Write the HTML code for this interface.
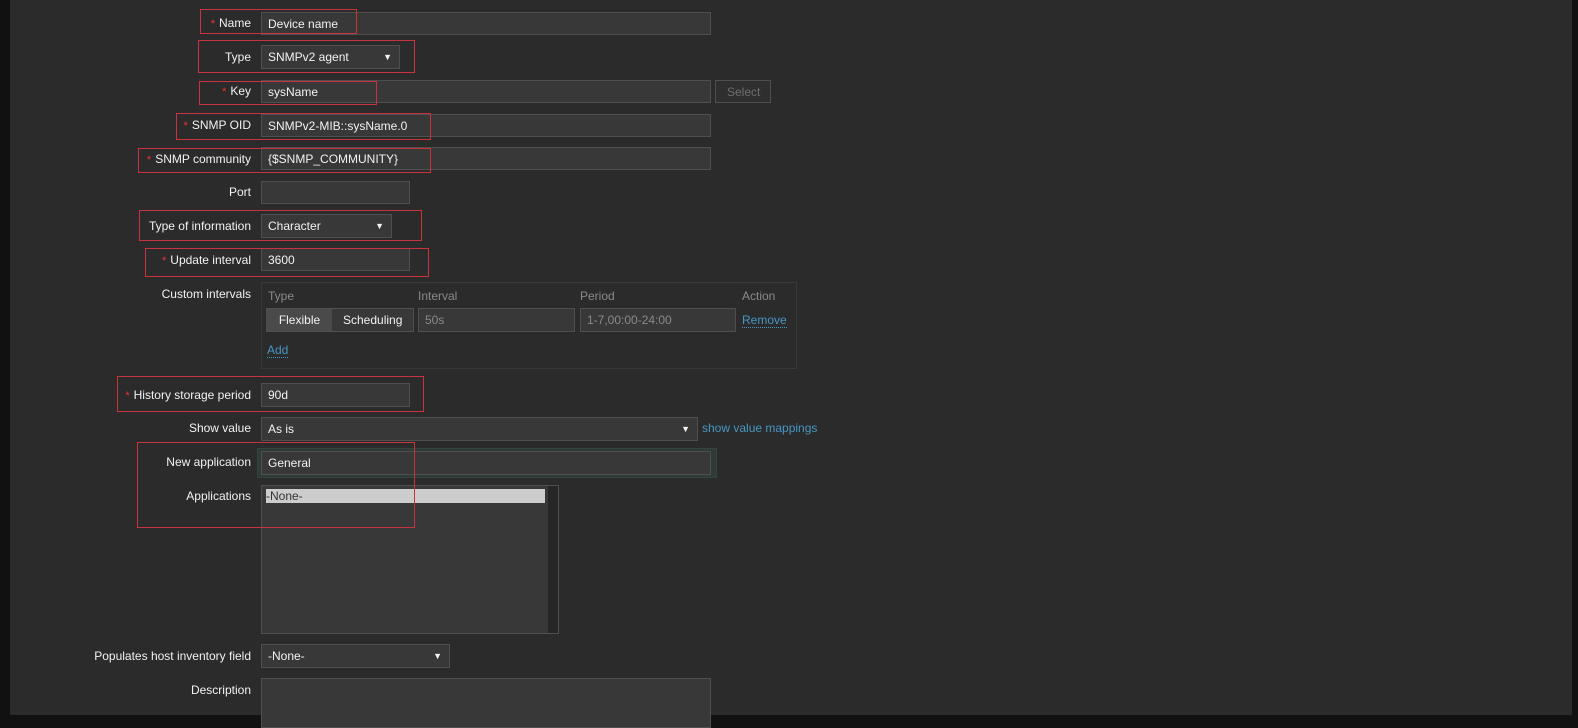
<!DOCTYPE html>
<html><head><style>
*{box-sizing:border-box;margin:0;padding:0}
body{width:1578px;height:715px;background:#111;position:relative;overflow:hidden;font:12px "Liberation Sans",Arial,sans-serif;color:#f2f2f2}
.pg{position:absolute;left:10px;top:0;width:1562px;height:715px;background:#2b2b2b}
.a{position:absolute}
.l{position:absolute;right:1327px;text-align:right;white-space:nowrap;line-height:14px}
.s{color:#e33;font-size:11px;margin-right:4px}
.i{position:absolute;background:#383838;border:1px solid #4f4f4f;padding-left:6px;line-height:22px;white-space:nowrap}
.r{position:absolute;border:1px solid #c9343c}
.ar{position:absolute;right:7px;top:0;font-size:9px}
.lk{color:#4796c4;border-bottom:1px dotted #4796c4}
.g{color:#8a8a8a}
</style></head><body>
<div class="pg"></div>

<div class="l" style="top:16px"><span class="s">*</span>Name</div>
<div class="i" style="left:261px;top:12px;width:450px;height:23px">Device name</div>
<div class="r" style="left:200px;top:9px;width:157px;height:25px"></div>

<div class="l" style="top:50px">Type</div>
<div class="i" style="left:261px;top:45px;width:139px;height:24px">SNMPv2 agent<span class="ar">▼</span></div>
<div class="r" style="left:198px;top:40px;width:217px;height:33px"></div>

<div class="l" style="top:84px"><span class="s">*</span>Key</div>
<div class="i" style="left:261px;top:80px;width:450px;height:23px">sysName</div>
<div class="i" style="left:715px;top:80px;width:56px;height:23px;color:#6f6f6f;background:#2f2f2f;padding-left:11px">Select</div>
<div class="r" style="left:199px;top:81px;width:178px;height:24px"></div>

<div class="l" style="top:118px"><span class="s">*</span>SNMP OID</div>
<div class="i" style="left:261px;top:114px;width:450px;height:23px">SNMPv2-MIB::sysName.0</div>
<div class="r" style="left:176px;top:113px;width:255px;height:27px"></div>

<div class="l" style="top:152px"><span class="s">*</span>SNMP community</div>
<div class="i" style="left:261px;top:147px;width:450px;height:23px">{$SNMP_COMMUNITY}</div>
<div class="r" style="left:138px;top:148px;width:293px;height:25px"></div>

<div class="l" style="top:185px">Port</div>
<div class="i" style="left:261px;top:181px;width:149px;height:23px"></div>

<div class="l" style="top:219px">Type of information</div>
<div class="i" style="left:261px;top:214px;width:131px;height:24px">Character<span class="ar">▼</span></div>
<div class="r" style="left:139px;top:210px;width:283px;height:31px"></div>

<div class="l" style="top:253px"><span class="s">*</span>Update interval</div>
<div class="i" style="left:261px;top:248px;width:149px;height:23px">3600</div>
<div class="r" style="left:145px;top:248px;width:284px;height:29px"></div>

<div class="l" style="top:287px">Custom intervals</div>
<div class="a" style="left:261px;top:282px;width:536px;height:87px;border:1px solid #383838"></div>
<div class="a g" style="left:268px;top:289px">Type</div>
<div class="a g" style="left:418px;top:289px">Interval</div>
<div class="a g" style="left:580px;top:289px">Period</div>
<div class="a g" style="left:742px;top:289px">Action</div>
<div class="a" style="left:266px;top:308px;width:148px;height:24px;border:1px solid #4f4f4f;background:#383838"></div>
<div class="a" style="left:267px;top:309px;width:65px;height:22px;background:#4a4a4a;text-align:center;line-height:22px">Flexible</div>
<div class="a" style="left:343px;top:313px">Scheduling</div>
<div class="i g" style="left:418px;top:308px;width:157px;height:24px">50s</div>
<div class="i g" style="left:580px;top:308px;width:156px;height:24px">1-7,00:00-24:00</div>
<div class="a lk" style="left:742px;top:313px;line-height:14px">Remove</div>
<div class="a lk" style="left:267px;top:343px;line-height:14px">Add</div>

<div class="l" style="top:388px"><span class="s">*</span>History storage period</div>
<div class="i" style="left:261px;top:383px;width:149px;height:24px">90d</div>
<div class="r" style="left:117px;top:376px;width:307px;height:36px"></div>

<div class="l" style="top:421px">Show value</div>
<div class="i" style="left:261px;top:417px;width:437px;height:24px">As is<span class="ar">▼</span></div>
<div class="a lk" style="left:702px;top:421px;border:none;line-height:14px">show value mappings</div>

<div class="l" style="top:455px">New application</div>
<div class="a" style="left:257px;top:448px;width:460px;height:30px;background:#2e3b36;border:1px solid #34453e"></div>
<div class="i" style="left:261px;top:451px;width:450px;height:24px">General</div>

<div class="l" style="top:489px">Applications</div>
<div class="a" style="left:261px;top:485px;width:298px;height:149px;background:#383838;border:1px solid #4f4f4f"></div>
<div class="a" style="left:548px;top:486px;width:10px;height:147px;background:#262626"></div>
<div class="a" style="left:266px;top:489px;width:279px;height:14px;background:#cdcdcd;color:#333;line-height:14px">-None-</div>
<div class="r" style="left:137px;top:442px;width:278px;height:86px"></div>

<div class="l" style="top:649px">Populates host inventory field</div>
<div class="i" style="left:261px;top:644px;width:189px;height:24px">-None-<span class="ar">▼</span></div>

<div class="l" style="top:683px">Description</div>
<div class="i" style="left:261px;top:678px;width:450px;height:50px"></div>
</body></html>
